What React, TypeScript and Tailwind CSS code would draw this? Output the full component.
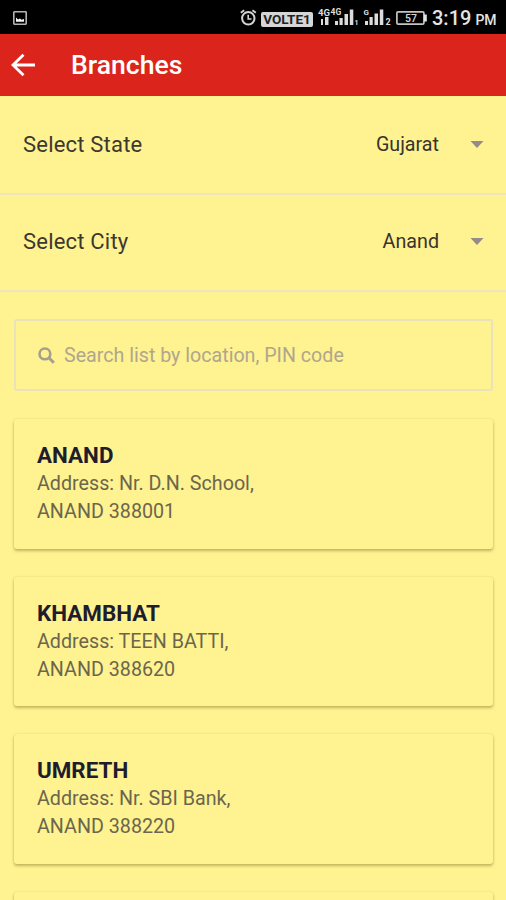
import React, { useState } from 'react';

const StatusBar: React.FC = () => (
  <div className="flex h-[34px] shrink-0 items-center bg-black pl-[13px] text-[#e4e4e4]">
    <svg className="mt-[2px] h-[14px] w-[14px] shrink-0" viewBox="0 0 14 14">
      <rect x="0.8" y="0.8" width="12.4" height="12.4" rx="0.6" fill="none" stroke="#b4b4b4" strokeWidth="1.6" />
      <path d="M3 10.8V6.5l2 2 2-1 1.5 1.2L11 8v2.8z" fill="#f4f4f4" />
    </svg>

    <svg className="ml-[213px] mt-[1px] h-[18px] w-[17px] shrink-0" viewBox="0 0 17 18" fill="none" stroke="#d4d4d4">
      <circle cx="8.3" cy="9.3" r="6.2" strokeWidth="2" />
      <path d="M8.2 5.8v4.2h3.3" strokeWidth="1.6" />
      <path d="M0.8 3.8l3.4-2.6M15.8 3.8l-3.4-2.6" strokeWidth="1.8" />
    </svg>
    <span className="ml-[4px] mt-[5px] flex h-[15px] w-[52px] shrink-0 items-center justify-center rounded-[2px] bg-[#d6d6d6] text-[13.5px] font-bold leading-none text-[#222]">
      VOLTE1
    </span>

    {/* Dual SIM signal strength */}
    <svg className="ml-[5px] h-[34px] w-[74px] shrink-0" viewBox="0 0 74 34" fill="#dcdcdc">
      <g fontFamily="Roboto, sans-serif" fontWeight="700">
        <text x="0" y="15.5" fontSize="9.5">4G</text>
        <text x="12.5" y="15" fontSize="8.5">4G</text>
        <text x="45.5" y="15" fontSize="8">G</text>
        <text x="36.5" y="25" fontSize="7">1</text>
        <text x="67.5" y="25" fontSize="9">2</text>
      </g>
      <path d="M3 19h2v6H3zM7 17h3.5v8H7z" />
      <path d="M17 21h3v4h-3zM21.5 18h3.2v7h-3.2zM26.5 14H30v11h-3.5zM31.8 9.5h3.5V25h-3.5z" />
      <path d="M47 21h3v4h-3zM51.5 17h3.2v8h-3.2zM56.5 13.5H60V25h-3.5zM61.8 9.500h3.5V25h-3.5z" />
    </svg>

    <svg className="ml-[4px] mt-[2px] h-[14px] w-[31px] shrink-0" viewBox="0 0 31 14">
      <rect x="0.9" y="0.9" width="27" height="12.2" rx="1.2" fill="none" stroke="#c4c4c4" strokeWidth="1.7" />
      <path d="M28 3.5h2.8v7H28z" fill="#e4e4e4" />
      <text x="15" y="10.8" textAnchor="middle" fontSize="10.5" fontWeight="500" fill="#d8d8d8" fontFamily="Roboto, sans-serif">57</text>
    </svg>
    <span className="ml-[5px] mt-[2px] whitespace-nowrap text-[20px] font-medium leading-none">
      3:19<span className="ml-[4px] text-[14px]">PM</span>
    </span>
  </div>
);

const SelectRow: React.FC<{ label: string; value: string }> = ({ label, value }) => (
  <button className="flex h-[97px] w-full shrink-0 items-center border-b-2 border-[#ece5bd] pb-[2px] pl-[23px] pr-[22px] text-left text-[#3c3830]">
    <span className="flex-1 text-[22px] tracking-[0.2px]">{label}</span>
    <span className="text-[19.7px] text-[#38342c]">{value}</span>
    <svg className="ml-[31px] h-[7px] w-[14px]" viewBox="0 0 14 7">
      <path d="M0.5 0h13L7 7z" fill="#958b8b" />
    </svg>
  </button>
);

const App: React.FC = () => {
  const [query, setQuery] = useState('');

  const branches = [
    { name: 'ANAND', address: 'Nr. D.N. School,', pin: 'ANAND 388001' },
    { name: 'KHAMBHAT', address: 'TEEN BATTI,', pin: 'ANAND 388620' },
    { name: 'UMRETH', address: 'Nr. SBI Bank,', pin: 'ANAND 388220' },
  ];

  return (
    <div className="flex h-[900px] w-[506px] flex-col overflow-hidden bg-[#fef291] font-[Roboto,sans-serif]">
      <StatusBar />

      <header className="flex h-[62px] shrink-0 items-center bg-[#db251c] pl-[11px] text-white">
        <svg className="h-[24px] w-[24px]" viewBox="0 0 24 24" fill="none" stroke="currentColor" strokeWidth="2.8">
          <path d="M24 12H2M12.5 1.8L2 12l10.5 10.2" />
        </svg>
        <h1 className="ml-[36px] text-[26.6px] font-medium leading-none">Branches</h1>
      </header>

      <div className="shrink-0 pt-[2px]">
        <SelectRow label="Select State" value="Gujarat" />
        <SelectRow label="Select City" value="Anand" />
      </div>

      <div className="ml-[14px] mr-[13px] mt-[27px] flex h-[72px] shrink-0 items-center rounded-[3px] border-2 border-[#eae2bb] pl-[22px]">
        <svg className="h-[17px] w-[17px]" viewBox="0 0 17 17" fill="none" stroke="#a79f8c">
          <circle cx="6.9" cy="6.9" r="5.4" strokeWidth="2.6" />
          <path d="M10.8 10.8l5 5" strokeWidth="3" />
        </svg>
        <input
          value={query}
          onChange={e => setQuery(e.target.value)}
          placeholder="Search list by location, PIN code"
          className="ml-[9px] flex-1 bg-transparent pt-[2px] text-[19.65px] outline-none placeholder:text-[#b0a68d]"
        />
      </div>

      <div className="ml-[14px] mr-[13px] mt-[28px] flex flex-col gap-[28px]">
        {branches.filter(b => b.name.includes(query.toUpperCase())).map(b => (
          <div
            key={b.name}
            className="h-[129.5px] shrink-0 rounded-[3px] bg-[#fef291] px-[23px] pt-[23px] shadow-[0_2px_3px_rgba(90,80,0,0.35),0_0_2px_rgba(90,80,0,0.15)]"
          >
            <h2 className="mb-[2px] text-[22.4px] font-bold leading-[26px] text-[#1f1c2c]">{b.name}</h2>
            <p className="text-[19.7px] leading-[28px] text-[#6c664d]">Address: {b.address}</p>
            <p className="text-[19.7px] leading-[28px] text-[#6c664d]">{b.pin}</p>
          </div>
        ))}
        {/* top edge of the next card */}
        <div className="h-[129.5px] shrink-0 rounded-[3px] bg-[#fef291] shadow-[0_2px_3px_rgba(90,80,0,0.35),0_0_2px_rgba(90,80,0,0.15)]" />
      </div>
    </div>
  );
};

export default App;
